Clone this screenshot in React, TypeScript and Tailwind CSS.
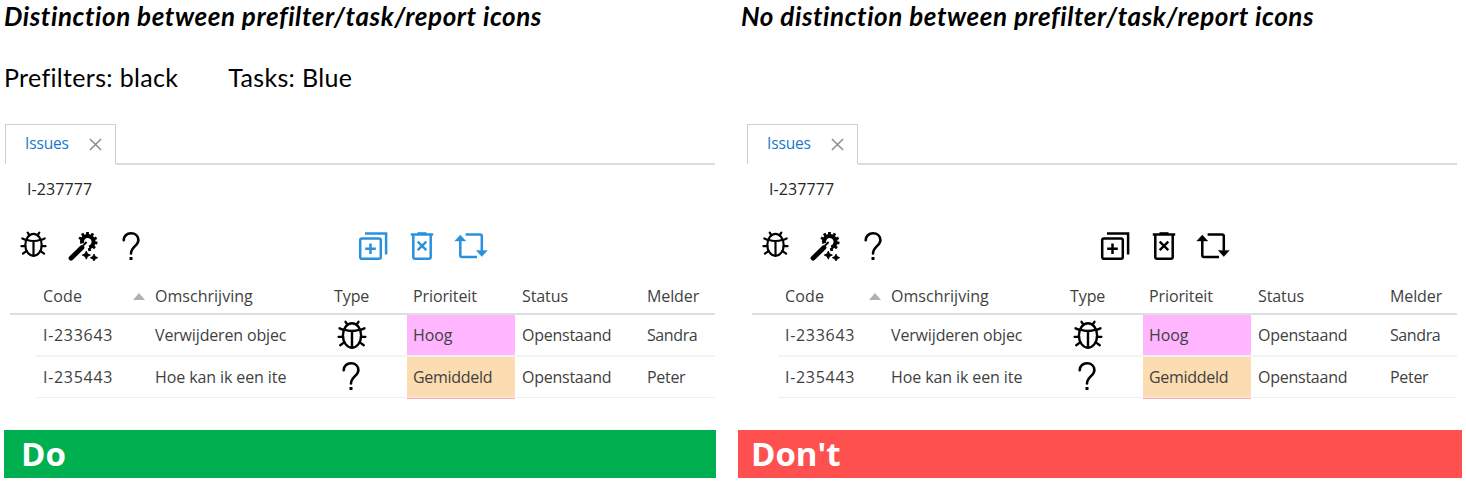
import type { ReactNode } from "react";

function BugIcon({ className }: { className: string }) {
  return (
    <svg viewBox="0 0 26 26" className={className} fill="none" stroke="currentColor" strokeWidth="2.1" strokeLinecap="round">
      <ellipse cx="13" cy="13.4" rx="7.9" ry="10.6" />
      <path d="M6.2 8.4Q13 10.8 19.8 8.4M13 9.8v14" />
      <path d="M7.4 1.6 9 4M18.6 1.6 17 4M2.2 7.2 5.6 8.6M23.8 7.2 20.4 8.6M1.4 14.6H5.2M24.6 14.6H20.8M2.8 21.8 6.2 19.4M23.2 21.8 19.8 19.4" />
    </svg>
  );
}

function WandIcon() {
  return (
    <svg viewBox="0 0 30 30" className="h-[30px] w-[30px] shrink-0" fill="none" stroke="currentColor">
      <path d="M3 27.2 14 16.6" strokeWidth="4.8" strokeLinecap="round" />
      <path d="M14.2 12.4A5.8 5.8 0 1 1 21.2 16.4" strokeWidth="4" />
      <path d="M19.5 1V4M14.2 2.4l1.6 3M25 2.4l-1.8 3M11 6.6l3.2 1.8M28.6 6.8l-3 1.4M29.4 12.2l-3-.6M27 17.2l-2.4-2M21.8 20l-.6-3" strokeWidth="2.8" />
      <path d="m15 14.6 3.6-3.6" strokeWidth="2" />
      <path d="m18.3 20 1.3 2.8 2.8 1.3-2.8 1.3-1.3 2.8-1.3-2.8-2.8-1.3 2.8-1.3zM26 23l1.2 2.5 2.5 1.2-2.5 1.2-1.2 2.1-1.2-2.1-2.5-1.2 2.5-1.2z" fill="currentColor" strokeWidth=".8" />
    </svg>
  );
}

function QuestionIcon() {
  return (
    <svg viewBox="0 0 20 30" className="h-[30px] w-5 shrink-0" fill="none" stroke="currentColor">
      <path d="M2.7 9.2C2.7 5 5.8 2.3 10 2.3s7.4 2.7 7.4 6.9c0 5.5-7.4 6.5-7.4 13.2" strokeWidth="2.6" strokeLinecap="round" />
      <rect x="8.5" y="26" width="3" height="3" fill="currentColor" stroke="none" />
    </svg>
  );
}

function CopyIcon() {
  return (
    <svg viewBox="0 0 30 30" className="h-[30px] w-[30px] shrink-0" fill="none" stroke="currentColor" strokeWidth="2.5">
      <rect x="2.2" y="7.4" width="20.6" height="20.4" rx="1.8" />
      <path d="M7 2.4H28.1V23.5M12.5 12.5v10.6M7.2 17.8h10.6" />
    </svg>
  );
}

function TrashIcon() {
  return (
    <svg viewBox="0 0 24 30" className="h-[30px] w-6 shrink-0" fill="none" stroke="currentColor" strokeWidth="2.5">
      <path d="M.8 3.6H23.2M3.3 3.6v22.4q0 1.8 1.8 1.8h13.8q1.8 0 1.8-1.8V3.6" />
      <path d="M7.5 2.2h9" strokeWidth="2" />
      <path d="m7.7 10.6 8.6 8.6M16.3 10.6 7.7 19.2" strokeWidth="2.4" />
    </svg>
  );
}

function CycleIcon() {
  return (
    <svg viewBox="0 0 34 30" className="h-[30px] w-[34px] shrink-0" fill="none" stroke="currentColor" strokeWidth="2.5">
      <path d="M6.3 9.4v14.9q0 1.6 1.6 1.6H23M11.6 3.4H26q1.8 0 1.8 1.8v14.5" />
      <path d="M6.3 4 11.8 10H.8zM27.8 25.6 22.3 19.4h11z" fill="currentColor" strokeWidth=".4" />
    </svg>
  );
}

type Side = {
  title: string;
  note?: ReactNode;
  taskColor: string;
  columns: string;
  titleClass: string;
  indent: string;
  verdict: ReactNode;
};

function Cell({ children, className = "" }: { children?: ReactNode; className?: string }) {
  return <div className={`flex items-center whitespace-nowrap pl-1.5 ${className}`}>{children}</div>;
}

function IssuePanel({ title, note, taskColor, columns, titleClass, indent, verdict }: Side) {
  const row = `grid ${columns}`;
  return (
    <section className="flex flex-col">
      <h2 className={`h-[34px] whitespace-nowrap font-['Lato',sans-serif] text-[26px] leading-[33px] font-bold italic text-black tracking-[0.58px] ${titleClass}`}>
        {title}
      </h2>
      <div className="flex h-[90px] gap-[50px] pt-[26px] pl-1 font-['Lato',sans-serif] text-[25px] leading-[34px] tracking-[0.33px] whitespace-nowrap text-black">{note}</div>

      <div className={indent}>
        <div className="ml-[5px] flex h-10 w-[710px]">
          <div className="flex w-[111px] items-center border-x border-t border-[#cfcfcf] pl-[19px] text-[15.5px] tracking-[-0.15px] text-[#1979ca]">
            <span className="-mt-0.5">Issues</span>
            <svg viewBox="0 0 14 14" className="ml-[20px] h-[13px] w-[13px]" stroke="#8b8b8b" strokeWidth="1.6">
              <path d="m1 1 12 12M13 1 1 13" />
            </svg>
          </div>
          <div className="-mb-px flex-1 border-b-2 border-[#dcdcdc]" />
        </div>

        <div className="flex h-[50px] items-center pl-[27px] text-[16px] tracking-[0.1px] text-[#262626]">I-237777</div>

        <div className="flex h-[65px] items-start pt-[17px] pl-5 text-black">
          <BugIcon className="h-[27px] w-[27px] shrink-0" />
          <div className="ml-[21px]"><WandIcon /></div>
          <div className="ml-[23px]"><QuestionIcon /></div>
          <div className={`ml-[217px] flex gap-[22px] ${taskColor}`}>
            <CopyIcon />
            <TrashIcon />
            <div className="-ml-[2px]"><CycleIcon /></div>
          </div>
        </div>

        <div className="ml-2.5 w-[705px] text-[16px] tracking-[-0.1px] text-[#3f3f3f]">
          <div className={`${row} h-9 border-b-2 border-[#dedede]`}>
            <Cell className="ml-[27px]"><span className="tracking-[0.15px]">Code</span></Cell>
            <Cell className="relative">
              <svg viewBox="0 0 12 7" className="absolute top-[14px] -left-4 h-[7px] w-3 fill-[#b2b2b2]">
                <path d="m6 0 6 7H0z" />
              </svg>
              <span className="tracking-[0.02px]">Omschrijving</span>
            </Cell>
            <Cell>Type</Cell>
            <Cell>Prioriteit</Cell>
            <Cell className="pl-[7px]">Status</Cell>
            <Cell>Melder</Cell>
          </div>
          <div className={`${row} h-10`}>
            <Cell className="ml-[27px] tracking-[0.7px]">I-233643</Cell>
            <Cell className="tracking-[-0.15px]">Verwijderen objec</Cell>
            <div className="flex items-center pl-[9px] text-black"><BugIcon className="-mt-px h-[30px] w-[30px]" /></div>
            <Cell className="bg-[#ffb6ff]">Hoog</Cell>
            <Cell className="pl-[7px] tracking-[-0.25px]">Openstaand</Cell>
            <Cell className="tracking-[-0.4px]">Sandra</Cell>
          </div>
          <div className="ml-[26px] h-0.5 bg-[#f3f3f3]" />
          <div className={`${row} h-10`}>
            <Cell className="ml-[27px] tracking-[0.7px]">I-235443</Cell>
            <Cell>Hoe kan ik een ite</Cell>
            <div className="flex items-center pl-[13px] text-black"><div className="-mt-0.5"><QuestionIcon /></div></div>
            <Cell className="bg-[#fcdcb1] tracking-[-0.3px]">Gemiddeld</Cell>
            <Cell className="pl-[7px] tracking-[-0.25px]">Openstaand</Cell>
            <Cell className="tracking-[-0.3px]">Peter</Cell>
          </div>
          <div className="ml-[26px] h-px bg-[#efefef]" />
          <div className={`${row} h-px`}>
            <div className="col-start-4 bg-[#f9a5a9]" />
          </div>
        </div>
      </div>
      <div className="h-[31px]" />
      {verdict}
    </section>
  );
}

export default function App() {
  return (
    <main className="flex h-[482px] w-[1466px] overflow-hidden bg-white font-['Open_Sans','Noto_Sans',sans-serif]">
      <div className="w-[741px] shrink-0">
        <IssuePanel
          title="Distinction between prefilter/task/report icons"
          titleClass="pl-1"
          indent="ml-0"
          note={<><span>Prefilters: black</span><span>Tasks: Blue</span></>}
          taskColor="text-[#2a92dc]"
          columns="grid-cols-[139px_179px_79px_108px_126px_74px]"
          verdict={<div className="ml-1 flex h-12 w-[712px] items-center bg-[#00b050] pl-[17px] text-[33px] font-bold text-white">Do</div>}
        />
      </div>
      <div className="w-[725px] shrink-0">
        <IssuePanel
          title="No distinction between prefilter/task/report icons"
          titleClass="pl-0"
          indent="ml-px"
          taskColor="text-black"
          columns="grid-cols-[133px_179px_79px_108px_133px_73px]"
          verdict={<div className="-ml-[3px] flex h-12 w-[724px] items-center bg-[#ff5050] pl-[13px] text-[33px] font-bold text-white">Don't</div>}
        />
      </div>
    </main>
  );
}
